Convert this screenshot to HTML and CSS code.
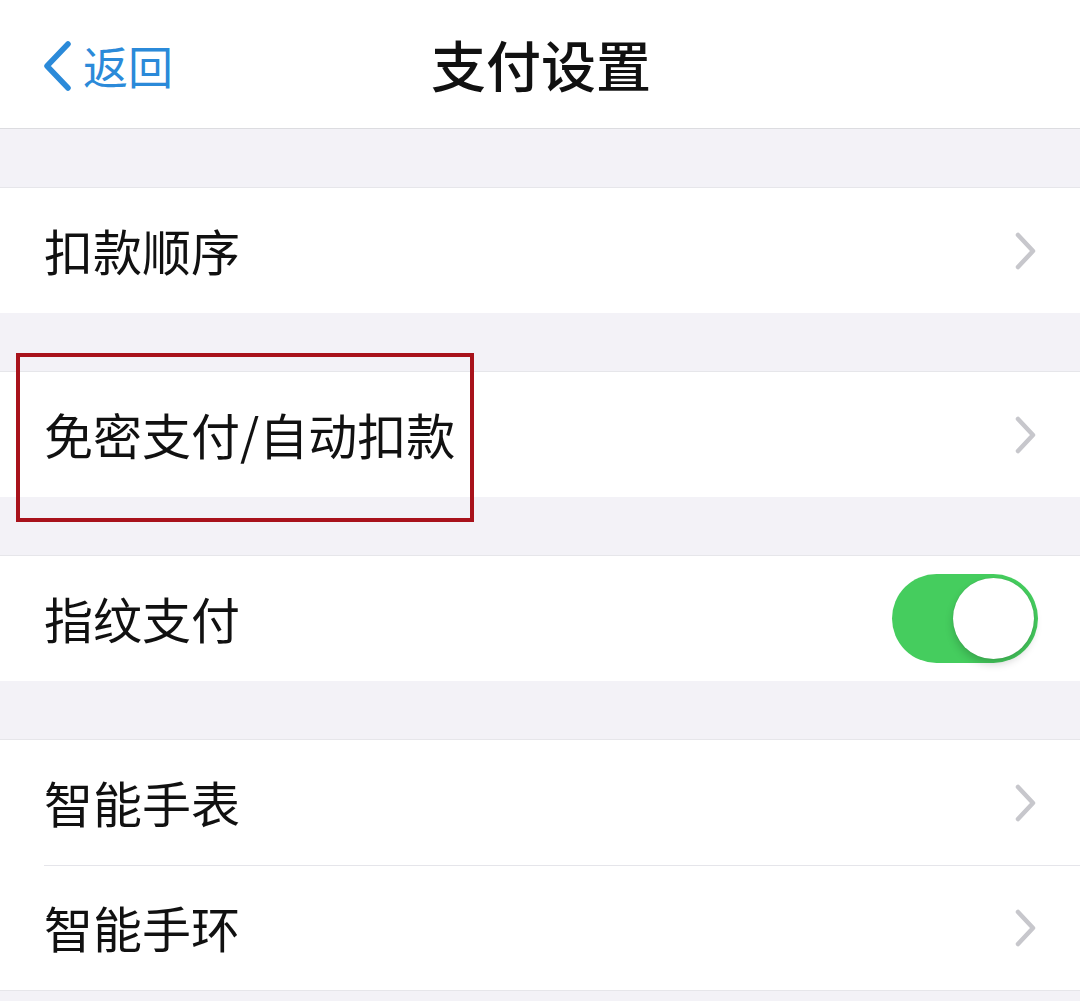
FILE: index.html
```html
<!DOCTYPE html>
<html lang="zh-CN">
<head>
<meta charset="utf-8">
<title>支付设置</title>
<link rel="stylesheet" href="styles.css">
</head>
<body>
<div class="page">
  <header class="nav">
    <div class="back">
      <svg class="back-icon" width="32" height="50" viewBox="0 0 32 50"><polyline points="26,3 5,25 26,47" fill="none" stroke="#2b8ad9" stroke-width="5.5" stroke-linecap="round" stroke-linejoin="round"/></svg>
      <span class="back-text">返回</span>
    </div>
    <h1 class="title">支付设置</h1>
  </header>

  <div class="gap"></div>
  <section class="group">
    <div class="row">
      <span class="label">扣款顺序</span>
      <svg class="chev" width="24" height="38" viewBox="0 0 24 38"><polyline points="4,3 19,19 4,35" fill="none" stroke="#c7c7cc" stroke-width="4.5" stroke-linecap="round" stroke-linejoin="round"/></svg>
    </div>
  </section>

  <div class="gap"></div>
  <section class="group">
    <div class="row">
      <span class="label">免密支付/自动扣款</span>
      <svg class="chev" width="24" height="38" viewBox="0 0 24 38"><polyline points="4,3 19,19 4,35" fill="none" stroke="#c7c7cc" stroke-width="4.5" stroke-linecap="round" stroke-linejoin="round"/></svg>
    </div>
    <div class="highlight"></div>
  </section>

  <div class="gap"></div>
  <section class="group">
    <div class="row">
      <span class="label">指纹支付</span>
      <div class="toggle"><div class="knob"></div></div>
    </div>
  </section>

  <div class="gap"></div>
  <section class="group">
    <div class="row">
      <span class="label">智能手表</span>
      <svg class="chev" width="24" height="38" viewBox="0 0 24 38"><polyline points="4,3 19,19 4,35" fill="none" stroke="#c7c7cc" stroke-width="4.5" stroke-linecap="round" stroke-linejoin="round"/></svg>
    </div>
    <div class="row sep">
      <span class="label">智能手环</span>
      <svg class="chev" width="24" height="38" viewBox="0 0 24 38"><polyline points="4,3 19,19 4,35" fill="none" stroke="#c7c7cc" stroke-width="4.5" stroke-linecap="round" stroke-linejoin="round"/></svg>
    </div>
  </section>
  <div class="gap last"></div>
</div>
</body>
</html>
```

FILE: styles.css
```css
* { box-sizing: border-box; margin: 0; padding: 0; }
html, body { width: 1080px; height: 1001px; overflow: hidden; }
body {
  background: #f3f2f7;
  font-family: "Noto Sans CJK SC", "Noto Sans", sans-serif;
  color: #111;
}
.page { display: flex; flex-direction: column; }
.nav {
  height: 129px;
  background: #fff;
  border-bottom: 1px solid #dcdce0;
  position: relative;
  display: flex;
  align-items: center;
  justify-content: center;
}
.back {
  position: absolute;
  left: 42px;
  top: 41px;
  display: flex;
  align-items: center;
  gap: 9px;
}
.back-text {
  font-size: 45px;
  line-height: 50px;
  color: #2b8ad9;
}
.title {
  font-size: 55px;
  font-weight: 500;
  line-height: 60px;
  color: #111;
  margin-top: -3px;
  margin-left: 2px;
}
.gap { height: 59px; border-bottom: 1px solid #e6e6ea; }
.gap.last { height: 11px; border-bottom: none; border-top: 1px solid #e6e6ea; }
.group { background: #fff; position: relative; }
.row {
  height: 125px;
  display: flex;
  align-items: center;
  justify-content: space-between;
  padding: 0 42px 0 44px;
}
.row.sep { border-top: 1px solid #e5e5ea; margin-left: 44px; padding-left: 0; }
.label { font-size: 49px; line-height: 60px; color: #111; margin-top: -2px; }
.chev { display: block; margin-right: 0; }
.toggle {
  width: 146px;
  height: 89px;
  border-radius: 45px;
  background: #45cd5e;
  position: relative;
  margin-right: 0;
}
.knob {
  position: absolute;
  right: 4px;
  top: 4px;
  width: 81px;
  height: 81px;
  border-radius: 50%;
  background: #fff;
  box-shadow: 0 5px 8px rgba(0,0,0,0.18), 0 0 1px rgba(0,0,0,0.2);
}
.highlight {
  position: absolute;
  left: 16px;
  top: -19px;
  width: 458px;
  height: 169px;
  border: 4px solid #a8121b;
}
```
